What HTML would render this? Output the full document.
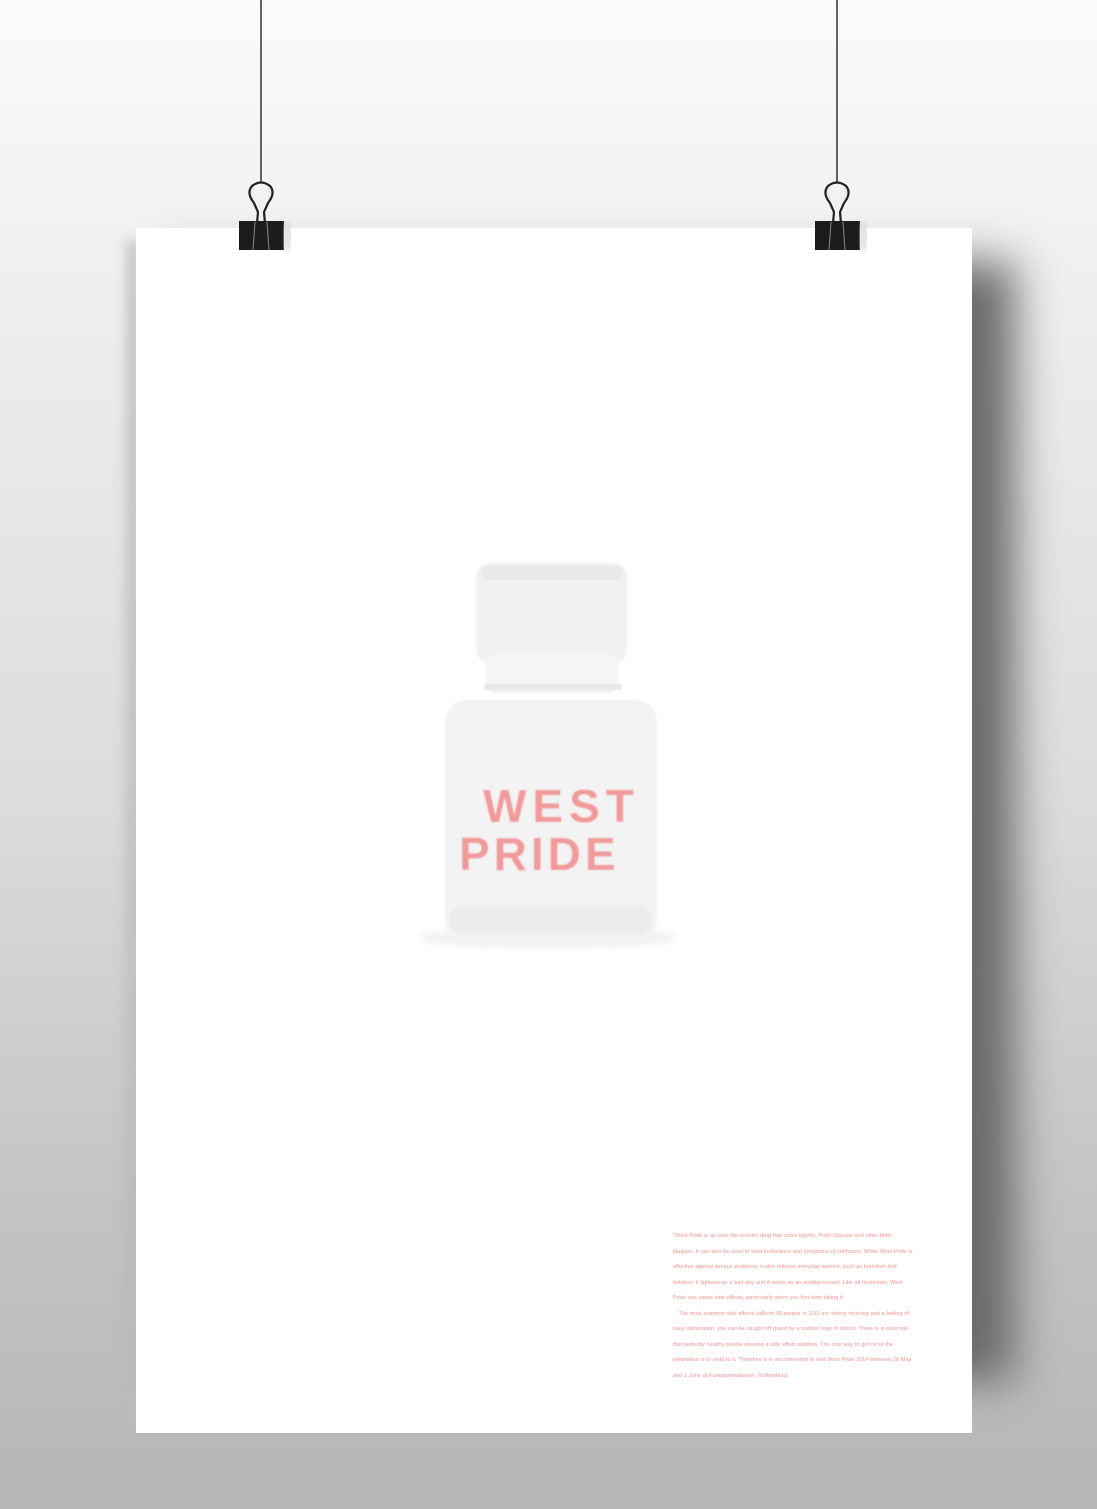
<!DOCTYPE html>
<html><head><meta charset="utf-8"><style>
html,body{margin:0;padding:0}
body{width:1097px;height:1509px;position:relative;overflow:hidden;background:linear-gradient(#fbfbfb 0px,#eeeeee 300px,#dcdcdc 800px,#c4c4c4 1200px,#b6b6b6 1509px);font-family:"Liberation Sans",sans-serif}
.sh{position:absolute;left:165px;top:262px;width:850px;height:1120px;background:#6a6a6a;filter:blur(22px)}
.sh2{position:absolute;left:128px;top:240px;width:10px;height:1190px;background:#bbb;filter:blur(6px)}
.poster{position:absolute;left:136px;top:228px;width:836px;height:1205px;background:#fff}
.txt{position:absolute;left:673px;top:1229px;width:240px;font-size:5.5px;line-height:15.5px;color:#f29494;text-align:left;word-spacing:0.3px}
svg{position:absolute;left:0;top:0}
</style></head><body>
<div class="sh"></div><div class="sh2"></div>
<div class="poster"></div>
<svg width="1097" height="1509">
<defs>
<filter id="b"><feGaussianBlur stdDeviation="4"/></filter>
<filter id="b2"><feGaussianBlur stdDeviation="0.7"/></filter>
</defs>
<g id="clipL">
<line x1="261" y1="0" x2="261" y2="183" stroke="#333" stroke-width="1.5"/>
<path d="M254 203 Q246 193 252 186 Q261 179 270 186 Q276 193 268 203 L264 212 L266 235 M254 203 L258 212 L256 235" fill="none" stroke="#222" stroke-width="2.2"/>
<path d="M255 201 Q249 193 254 188 M268 188 Q273 193 267 201" fill="none" stroke="#ddd" stroke-width="0.8"/>
<rect x="239" y="221" width="45" height="29" fill="#1c1c1c"/>
<path d="M255 222 L253 250 M267 222 L269 250" stroke="#888" stroke-width="1"/>
<rect x="284" y="224" width="6" height="26" fill="#ccc" filter="url(#b)"/>
</g>
<use href="#clipL" x="576"/>
<g filter="url(#b2)">
<ellipse cx="548" cy="938" rx="130" ry="10" fill="#f0f0f0" filter="url(#b)"/>
<rect x="476" y="563" width="151" height="100" rx="14" fill="#f1f1f1"/>
<rect x="482" y="566" width="140" height="14" rx="6" fill="#eaeaea"/>
<rect x="486" y="654" width="132" height="40" rx="10" fill="#f5f5f5"/>
<rect x="484" y="684" width="138" height="6" fill="#e9e9e9"/>
<rect x="445" y="700" width="212" height="242" rx="22" fill="#f3f3f3"/>
<rect x="450" y="905" width="202" height="30" rx="14" fill="#ececec"/>
<text x="483" y="822" font-family="Liberation Sans,sans-serif" font-weight="bold" font-size="46" fill="#f19a9a" letter-spacing="6">WEST</text>
<text x="459" y="870" font-family="Liberation Sans,sans-serif" font-weight="bold" font-size="46" fill="#f19a9a" letter-spacing="4">PRIDE</text>
</g>
</svg>
<div class="txt">*West Pride is an over-the-counter drug that cures bigotry, Putin Disease and other bitter plagues. It can also be used to treat intolerance and symptoms of confusion. While West Pride is effective against serious problems, it also relieves everyday worries, such as boredom and irritation; it lightens up a bad day and it works as an antidepressant. Like all medicines, West Pride can cause side effects, particularly when you first start taking it.<br>&nbsp;&nbsp;&nbsp;The must common side effects (affects 99 people in 100) are strong rejoicing and a feeling of easy intoxication, you can be caught off guard by a sudden urge to dance. There is a clear risk that perfectly healthy people develop a side effect addition. The only way to get rid of the temptation is to yield to it. Therefore it is reccomended to visit West Pride 2014 between 28 May and 1 June at Kungsportsplatsen, Gothenburg.</div>
</body></html>
